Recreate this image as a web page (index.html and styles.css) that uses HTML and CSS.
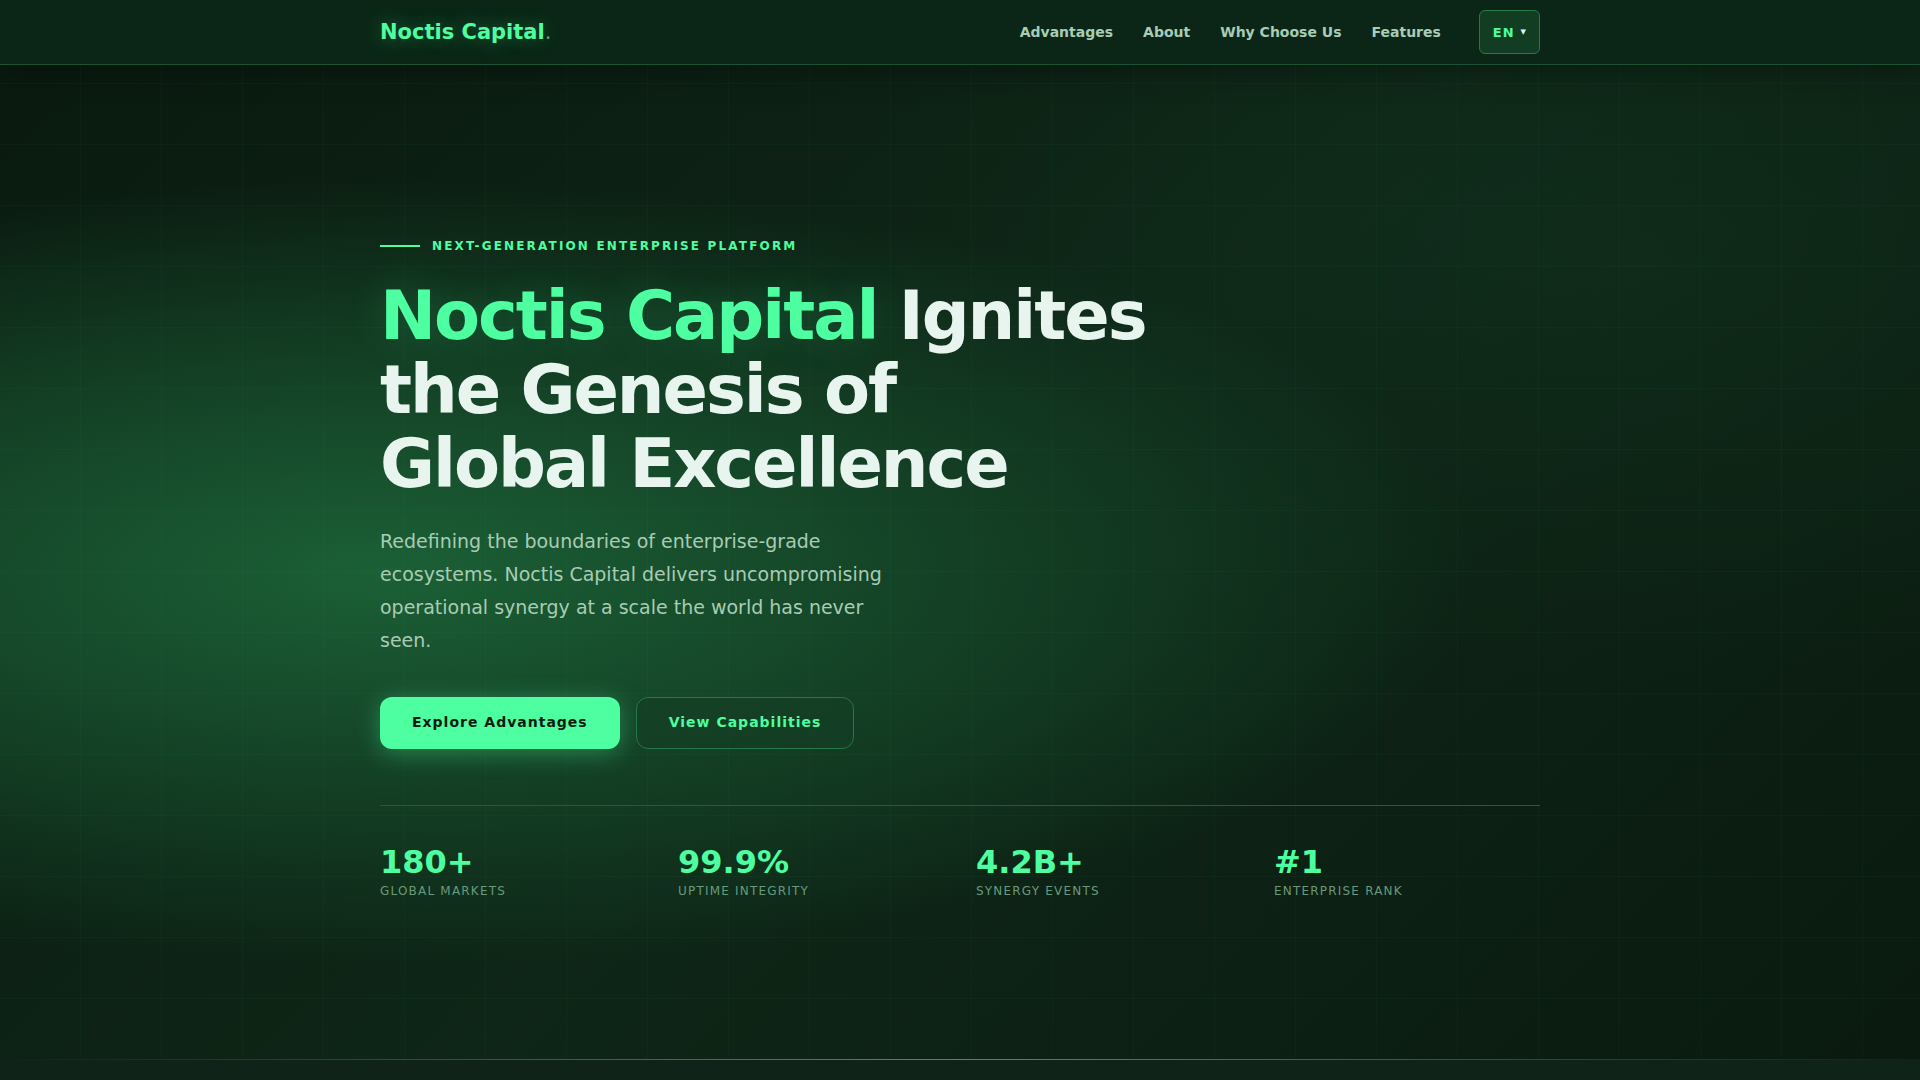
FILE: index.html
```html
<!DOCTYPE html>
<html lang="en">
<head>
  <meta charset="utf-8">
  <meta name="viewport" content="width=device-width, initial-scale=1">
  <title>Noctis Capital</title>
  <link rel="stylesheet" href="styles.css">
</head>
<body>
  <header class="site-header">
    <div class="container header-inner">
      <a class="logo" href="#top">Noctis Capital<span class="logo-dot">.</span></a>
      <div class="header-side">
        <nav class="nav" aria-label="Main">
          <a href="#advantages">Advantages</a>
          <a href="#about">About</a>
          <a href="#why">Why Choose Us</a>
          <a href="#features">Features</a>
        </nav>
        <button class="lang" type="button" aria-haspopup="true">EN <span class="lang-arrow">▼</span></button>
      </div>
    </div>
  </header>
  <main id="top">
    <section class="hero">
      <div class="container">
        <p class="eyebrow">Next-Generation Enterprise Platform</p>
        <h1 class="title"><span class="title-accent">Noctis Capital</span> Ignites<br>the Genesis of<br>Global Excellence</h1>
        <p class="lead">Redefining the boundaries of enterprise-grade ecosystems. Noctis Capital delivers uncompromising operational synergy at a scale the world has never seen.</p>
        <div class="actions">
          <a class="btn btn-primary" href="#advantages">Explore Advantages</a>
          <a class="btn btn-outline" href="#features">View Capabilities</a>
        </div>
        <dl class="stats">
          <div class="stat"><dt>Global Markets</dt><dd>180+</dd></div>
          <div class="stat"><dt>Uptime Integrity</dt><dd>99.9%</dd></div>
          <div class="stat"><dt>Synergy Events</dt><dd>4.2B+</dd></div>
          <div class="stat"><dt>Enterprise Rank</dt><dd>#1</dd></div>
        </dl>
      </div>
    </section>
    <section class="next" id="advantages"></section>
  </main>
</body>
</html>
```

FILE: styles.css
```css
:root {
  --accent: #4dffa0;
  --text: #e8f5ee;
  --text-soft: #a8ccb5;
  --text-dim: #6a9a7c;
}

* {
  box-sizing: border-box;
}

body {
  margin: 0;
  min-height: 100vh;
  display: flex;
  flex-direction: column;
  background: #0a1a0f;
  color: var(--text);
  font-family: "DejaVu Sans", sans-serif;
  font-size: 16px;
  line-height: 1.6;
}

a {
  text-decoration: none;
}

main {
  flex: 1;
  display: flex;
  flex-direction: column;
}

.container {
  width: 100%;
  max-width: 1208px;
  margin: 0 auto;
  padding: 0 24px;
}

.site-header {
  position: sticky;
  top: 0;
  z-index: 10;
  background: #0b2616;
  border-bottom: 1px solid #1a5232;
  box-shadow: 0 4px 32px rgba(0, 0, 0, 0.4);
}

.header-inner {
  min-height: 64px;
  display: flex;
  align-items: center;
  justify-content: space-between;
}

.logo {
  color: var(--accent);
  font-size: 21px;
  font-weight: 700;
  line-height: 36px;
  text-shadow: 0 0 20px rgba(77, 255, 160, 0.35);
}

.logo-dot {
  color: var(--text-dim);
  font-weight: 400;
}

.header-side {
  display: flex;
  align-items: center;
  gap: 38px;
}

.nav {
  display: flex;
  gap: 30px;
}

.nav a {
  color: var(--text-soft);
  font-size: 14px;
  font-weight: 700;
}

.lang {
  height: 44px;
  padding: 0 13px;
  display: flex;
  align-items: center;
  gap: 6px;
  border: 1px solid #23794a;
  border-radius: 6px;
  background: #133d23;
  color: var(--accent);
  font: 700 13px "DejaVu Sans", sans-serif;
  letter-spacing: 1px;
  cursor: pointer;
}

.lang-arrow {
  color: var(--text);
  font-size: 7px;
  letter-spacing: 0;
}

.hero {
  min-height: 92vh;
  padding: 78px 0 64px;
  display: flex;
  align-items: center;
  background:
    repeating-linear-gradient(0deg, transparent, transparent 60px, rgba(45, 158, 95, 0.05) 60px, rgba(45, 158, 95, 0.05) 61px),
    repeating-linear-gradient(90deg, transparent, transparent 80px, rgba(45, 158, 95, 0.05) 80px, rgba(45, 158, 95, 0.05) 81px),
    radial-gradient(ellipse 92% 64% at 20% 51%, #1b6036 0%, rgba(20, 66, 38, 0.9) 34%, transparent 62%),
    radial-gradient(ellipse 60% 60% at 85% 20%, rgba(20, 61, 36, 0.3) 0%, transparent 70%),
    linear-gradient(135deg, #0a1a0f 0%, #0e2617 50%, #0a1a0f 100%);
}

.eyebrow {
  margin: 0 0 23px;
  display: flex;
  align-items: center;
  gap: 12px;
  color: var(--accent);
  font-size: 12px;
  font-weight: 700;
  letter-spacing: 0.18em;
  text-transform: uppercase;
}

.eyebrow::before {
  content: "";
  width: 40px;
  height: 2px;
  background: var(--accent);
}

.title {
  margin: 0 0 24px;
  font-size: 67px;
  font-weight: 700;
  line-height: 74px;
  letter-spacing: -0.03em;
}

.title-accent {
  color: var(--accent);
  text-shadow: 0 0 40px rgba(77, 255, 160, 0.2);
}

.lead {
  max-width: 520px;
  margin: 0 0 40px;
  color: var(--text-soft);
  font-size: 19px;
  line-height: 33px;
}

.actions {
  display: flex;
  flex-wrap: wrap;
  gap: 16px;
}

.btn {
  padding: 14px 32px 16px;
  border: 0 solid #23794a;
  border-radius: 12px;
  font-size: 14px;
  font-weight: 700;
  line-height: 22px;
  letter-spacing: 1px;
}

.btn-primary {
  background: var(--accent);
  color: #0a1a0f;
  box-shadow: 0 4px 24px rgba(77, 255, 160, 0.35);
}

.btn-outline {
  padding: 13px 32px 15px;
  border-width: 1px;
  background: rgba(20, 61, 36, 0.6);
  color: var(--accent);
}

.stats {
  margin: 56px 0 0;
  padding-top: 40px;
  display: grid;
  grid-template-columns: repeat(4, 1fr);
  gap: 32px;
  border-top: 1px solid #215c3b;
}

.stat {
  display: flex;
  flex-direction: column-reverse;
  gap: 4px;
}

.stat dd {
  margin: 0;
  color: var(--accent);
  font-size: 32px;
  font-weight: 700;
  line-height: 32px;
}

.stat dt {
  color: var(--text-dim);
  font-size: 12px;
  letter-spacing: 0.1em;
  text-transform: uppercase;
}

.next {
  flex: 1;
  background: #0f2318;
}

.next::before {
  content: "";
  display: block;
  height: 1px;
  background: linear-gradient(90deg, transparent, #2d9e5f, transparent);
}
```
